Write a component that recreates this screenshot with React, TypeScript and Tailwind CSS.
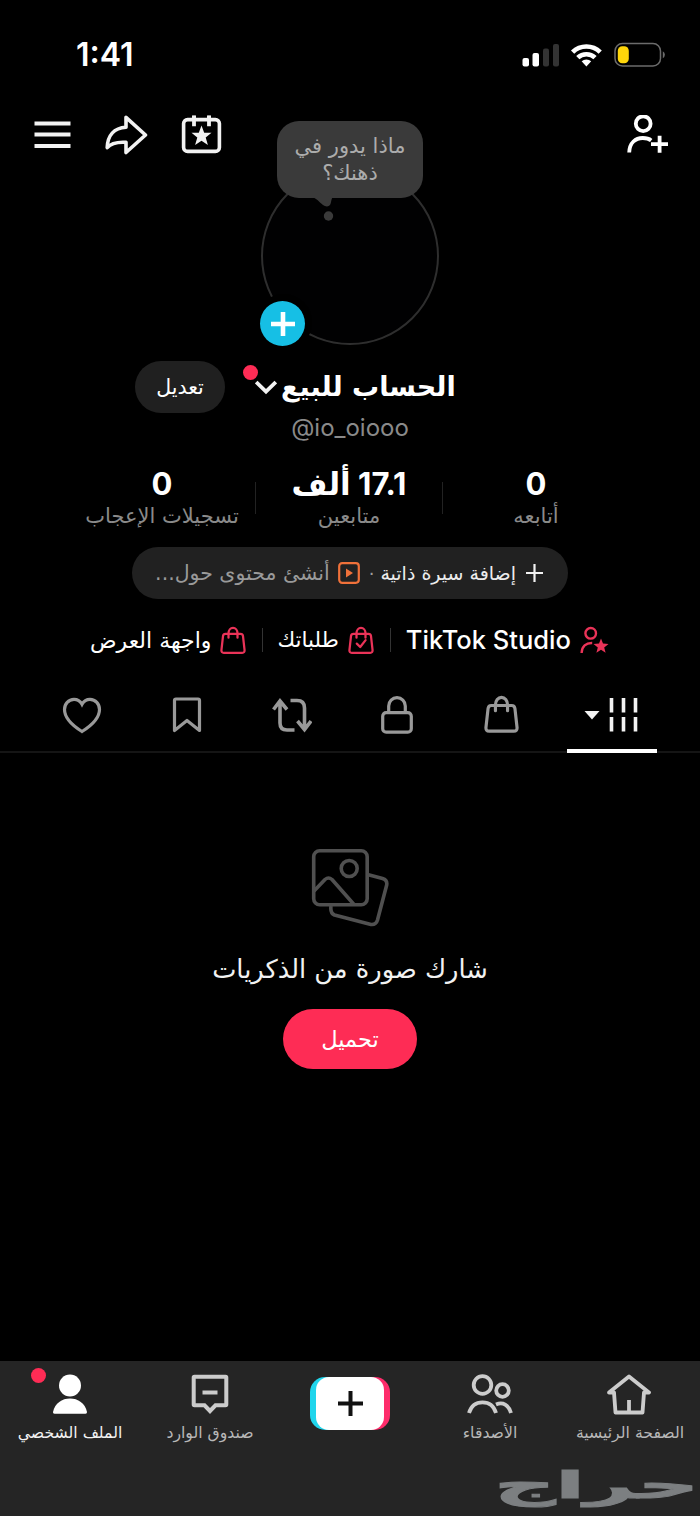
import type { ReactNode } from "react";

const arabic = "font-['DejaVu_Sans','Noto_Sans',sans-serif]";

function StatusBar() {
  return (
    <div className="flex h-[110px] items-center justify-between pl-[76px] pr-[34px]">
      <span className="text-[32px] font-semibold leading-none">
        1:41
      </span>
      <div className="flex items-center">
        <svg width="38" height="24" viewBox="0 0 38 24">
          <rect x="0.5" y="15" width="6.5" height="8.5" rx="2" fill="#fff" />
          <rect x="10.5" y="10" width="6.5" height="13.5" rx="2" fill="#fff" />
          <rect x="21" y="5.5" width="6" height="18" rx="2" fill="#333" />
          <rect x="31" y="1" width="6" height="22.5" rx="2" fill="#333" />
        </svg>
        <svg className="ml-[10px]" width="33" height="24" viewBox="0 0 33 24">
          <g fill="none" stroke="#fff" strokeWidth="4.6">
            <path d="M2.6 9.2a19.6 19.6 0 0 1 27.6 0" />
            <path d="M7.8 14.7a12.3 12.3 0 0 1 17.2 0" />
          </g>
          <path d="M11.6 18.3a7 7 0 0 1 9.6 0L16.4 23.4z" fill="#fff" />
        </svg>
        <svg className="ml-[11px]" width="52" height="26" viewBox="0 0 52 26">
          <rect x="1" y="1.5" width="45.5" height="22.5" rx="7.5" fill="none" stroke="#6b6b6b" strokeWidth="1.5" />
          <rect x="3.8" y="4.2" width="11" height="17" rx="4.5" fill="#ffd60a" />
          <path d="M48.8 9.3a4 4 0 0 1 0 7z" fill="#6b6b6b" />
        </svg>
      </div>
    </div>
  );
}

function Header() {
  return (
    <header className="flex h-[50px] items-center justify-between pl-[34px] pr-[31px]">
      <div className="flex items-center">
        <svg width="37" height="28" viewBox="0 0 37 28" stroke="#f2f2f2" strokeWidth="3.8">
          <path d="M.5 2.5h36M.5 13.5h36M.5 25h36" />
        </svg>
        <svg className="ml-[34px]" width="43" height="40" viewBox="0 0 43 40" fill="none" stroke="#f2f2f2" strokeWidth="3.6" strokeLinejoin="round">
          <path d="M21 2.3 40.5 20 21 37.5V27.3C12 26.8 6 28 2.2 32.6 2.6 20.5 9 13 21 12.3z" />
        </svg>
        <svg className="ml-[33px]" width="42" height="40" viewBox="0 0 42 40">
          <rect x="2.600" y="4.600" width="35.800" height="31.800" rx="4" fill="none" stroke="#f2f2f2" strokeWidth="3.6" />
          <path d="M13 .5v5M28 .5v5" stroke="#f2f2f2" strokeWidth="3.8" />
          <path d="M13 .8v10.4M28 .8v10.4" stroke="#f2f2f2" strokeWidth="3.8" />
          <path d="M20.500 10.500l2.700 7.300h7.300l-5.800 4.800 2.200 7.400-6.400-4.300-6.400 4.300 2.200-7.400-5.800-4.800h7.300z" fill="#f2f2f2" />
        </svg>
      </div>
      <svg width="42" height="40" viewBox="0 0 42 40" fill="none" stroke="#fff" strokeWidth="3.8">
        <circle cx="16.2" cy="8.7" r="7.4" />
        <path d="M2.2 37.500c.3-10 6.500-14.500 13.500-14.500 4.200 0 7 1.200 8.500 2.400" />
        <path d="M24 29.200h17M32.600 20.800v17" />
      </svg>
    </header>
  );
}

function Avatar() {
  return (
    <div className="relative mx-auto mt-[7px] size-[178px] rounded-full border-2 border-[#2e2e2e] bg-[#010102]">
      <div className="absolute -left-2 top-[125px] size-[57px] rounded-full bg-black" />
      <button className="absolute -left-[3px] top-[132px] flex size-[45px] items-center justify-center rounded-full bg-[#16bfe5]">
        <svg width="24" height="24" viewBox="0 0 24 24" stroke="#fff" strokeWidth="4.6">
          <path d="M0 12h24M12 0v24" />
        </svg>
      </button>
      <div className="absolute left-[14px] -top-[48px] flex h-[77px] w-[146px] items-center justify-center rounded-[22px] bg-[#3a3a3a]">
        <p dir="rtl" className={`${arabic} flex flex-col items-center whitespace-nowrap pt-px text-[21px] leading-[27px] text-[#acacac]`}>
          <span>ماذا يدور في</span>
          <span>ذهنك؟</span>
        </p>
      </div>
      <svg className="absolute left-[48px] top-[28px]" width="32" height="26" viewBox="0 0 32 26" fill="#3a3a3a">
        <path d="M0 0h22c-2 2-1.500 4-2.500 7-1 3-5 3-7.500 1C8 5 6 1 0 0z" />
        <circle cx="17.500" cy="19" r="4.700" />
      </svg>
    </div>
  );
}

function NameRow() {
  return (
    <div className="mt-[16px] flex h-[52px] items-center pl-[135px]">
      <button dir="rtl" className={`${arabic} h-[52px] w-[90px] rounded-full bg-[#202020] text-[20.500px]`}>
        تعديل
      </button>
      <div className="relative ml-[30px] flex items-center">
        <span className="absolute -left-[12px] -top-[4px] size-[15px] rounded-full bg-[#fe2c55]" />
        <svg width="22" height="15" viewBox="0 0 22 15" fill="none" stroke="#f2f2f2" strokeWidth="3.8">
          <path d="M1.200 2 11 11.500l9.800-9.500" />
        </svg>
        <h1 dir="rtl" className={`${arabic} ml-1 whitespace-nowrap text-[27px] font-bold leading-[36px]`}>
          الحساب للبيع
        </h1>
      </div>
    </div>
  );
}

function Stat({ value, label }: { value: string; label: string }) {
  return (
    <div dir="rtl" className="flex flex-col items-center whitespace-nowrap">
      <span className="font-['Inter','DejaVu_Sans',sans-serif] text-[31px] font-bold leading-[36px]">
        {value}
      </span>
      <span className={`${arabic} text-[21px] leading-[28px] text-[#8a8a8a]`}>
        {label}
      </span>
    </div>
  );
}

function Stats() {
  return (
    <div className="mt-[24px] grid grid-cols-[186px_1px_186px_1px_186px] items-center justify-center pr-[2px]">
      <Stat value="0" label="تسجيلات الإعجاب" />
      <span className="h-8 bg-[#222]" />
      <Stat value="17.1 ألف" label="متابعين" />
      <span className="h-8 bg-[#222]" />
      <Stat value="0" label="أتابعه" />
    </div>
  );
}

function BioPill() {
  return (
    <div dir="rtl" className={`${arabic} mx-auto mt-[17px] flex h-[52px] w-[436px] items-center whitespace-nowrap rounded-full bg-[#212121] pr-[25px]`}>
      <svg width="17" height="18" viewBox="0 0 17 18" stroke="#f2f2f2" strokeWidth="2.200">
        <path d="M0 9h17M8.500 0v18" />
      </svg>
      <span className="mr-[10px] text-[19px] text-[#ececec]">إضافة سيرة ذاتية</span>
      <span className="mx-[6px] text-[18px] text-[#a0a0a0]">·</span>
      <svg className="mr-[3px]" width="22" height="22" viewBox="0 0 22 22">
        <rect x="1.200" y="1.200" width="19.600" height="19.600" rx="3" fill="none" stroke="#f0713a" strokeWidth="2.200" />
        <path d="M8 6.500v9l7-4.500z" fill="#f0713a" />
      </svg>
      <span className="mr-[8px] text-[20.500px] text-[#9a9a9a]">أنشئ محتوى حول...</span>
    </div>
  );
}

const bagBody = "M5.500 8h15.500q2.200 0 2.500 2.200l1.600 14.300q.3 3-2.500 3H4q-2.800 0-2.500-3l1.600-14.300q.300-2.200 2.400-2.200z";
const bagHandle = "M8.700 12V7.500a4.600 5.700 0 0 1 9.200 0V12";

function Bag({ size, color, strokeWidth, children }: { size: number; color: string; strokeWidth: number; children?: ReactNode }) {
  return (
    <svg width={size} height={(size * 29) / 26.6} viewBox="0 0 26.6 29" fill="none" stroke={color} strokeWidth={strokeWidth} strokeLinejoin="round" strokeLinecap="round">
      <path d={bagBody} />
      <path d={bagHandle} />
      {children}
    </svg>
  );
}

function QuickLinks() {
  return (
    <div className={`${arabic} mt-[22px] flex h-[38px] items-center whitespace-nowrap pl-[90px] text-[22px]`}>
      <span dir="rtl">واجهة العرض</span>
      <span className="ml-[9px]">
        <Bag size={26} color="#ea3358" strokeWidth={2.3} />
      </span>
      <span className="ml-[16px] h-6 w-px bg-[#333]" />
      <span dir="rtl" className="ml-[14px] text-[21.500px]">طلباتك</span>
      <span className="ml-[9px]">
        <Bag size={26} color="#ea3358" strokeWidth={2.3}>
          <path d="m9 18 3.500 3.500 5.500-7" />
        </Bag>
      </span>
      <span className="ml-[16px] h-6 w-px bg-[#333]" />
      <span className="ml-[15px] font-['Inter',sans-serif] text-[25.500px] font-medium">
        TikTok Studio
      </span>
      <svg className="ml-[9px]" width="29" height="28" viewBox="0 0 29 28" fill="none" stroke="#ea3358" strokeWidth="2.400">
        <circle cx="10.700" cy="7.300" r="5.300" />
        <path d="M1.600 27c.2-6.600 4.400-10.200 10.600-10" />
        <path d="m21 12.500 2 5.100 5.500.3-4.300 3.500 1.400 5.300-4.600-3-4.600 3 1.400-5.300-4.300-3.500 5.500-.3z" fill="#ea3358" stroke="none" />
      </svg>
    </div>
  );
}

function Tabs() {
  return (
    <nav className="mt-3 flex h-[82px] border-b-2 border-[#151515] pl-[29px]">
      <div className="flex w-[105px] items-center justify-center pt-[7px]">
        <svg width="40" height="38" viewBox="0 0 40 38" fill="none" stroke="#999" strokeWidth="3.2">
          <path d="M20 35.500C12 30.500 2.500 23 2.500 13.500 2.500 8 6.500 3.300 12 3.300c3.500 0 6.300 1.900 8 5 1.700-3.100 4.500-5 8-5 5.500 0 9.500 4.700 9.500 10.200C37.500 23 28 30.500 20 35.500z" />
        </svg>
      </div>
      <div className="flex w-[105px] items-center justify-center pt-[7px]">
        <svg width="30" height="36" viewBox="0 0 30 36" fill="none" stroke="#999" strokeWidth="3.2" strokeLinejoin="round">
          <path d="M2.500 3.500q0-1.500 1.500-1.500h22q1.500 0 1.500 1.500v30L15 23.500l-12.500 10z" />
        </svg>
      </div>
      <div className="flex w-[105px] items-center justify-center pt-[7px]">
        <svg width="40" height="36" viewBox="0 0 40 36" fill="none" stroke="#999" strokeWidth="3.600">
          <path d="M1.500 12.500 8 4l7 8.500M8 4.500V26q0 7 7 7h7.500" />
          <path d="M18.500 3.500h6.500q7.500 0 7.500 7.500v21M25.500 24l7 8.500 6.500-8.500" />
        </svg>
      </div>
      <div className="flex w-[105px] items-center justify-center pt-[7px]">
        <svg width="32" height="38" viewBox="0 0 32 38" fill="none" stroke="#999" strokeWidth="3.2">
          <rect x="1.700" y="16.700" width="28.600" height="19.500" rx="3.500" />
          <path d="M7.700 16.700V10a8.300 8.300 0 0 1 16.600 0v6.700" />
        </svg>
      </div>
      <div className="flex w-[105px] items-center justify-center pt-[7px]">
        <Bag size={35} color="#999" strokeWidth={2.4} />
      </div>
      <div className="ml-[13px] flex h-[82px] w-[90px] items-center justify-center border-b-[4px] border-white pt-[10px] pr-[2px]">
        <svg width="54" height="34" viewBox="0 0 54 34">
          <path d="M.5 13h15L8 21.500z" fill="#f2f2f2" />
          <path d="M27.500 0v14.500M39.500 0v14.500M51.500 0v14.500M27.500 19v14.500M39.500 19v14.500M51.500 19v14.500" stroke="#f2f2f2" strokeWidth="3.6" />
        </svg>
      </div>
    </nav>
  );
}

function EmptyState() {
  return (
    <main className="flex flex-1 flex-col items-center pt-[96px]">
      <svg width="78" height="79" viewBox="0 0 78 79" fill="none" stroke="#505050" strokeWidth="3.6" strokeLinejoin="round">
        <rect x="2.700" y="1.800" width="53.500" height="54" rx="6" />
        <circle cx="38.200" cy="19.500" r="8" />
        <path d="m3 42 11-11.500q3.500-3 7 0L43 55.500" />
        <path d="m56.500 25.500 15 4q5 1.500 4.200 6.500L66.500 71q-1.500 5-6.500 4.500L23.500 66q-4.500-2-3.500-9" />
      </svg>
      <p dir="rtl" className={`${arabic} mt-[22px] whitespace-nowrap text-[25.700px] leading-[38px] text-[#f2f2f2]`}>
        شارك صورة من الذكريات
      </p>
      <button dir="rtl" className={`${arabic} mt-[21px] h-[60px] w-[134px] rounded-full bg-[#fe2c55] pt-[2px] text-[22.500px]`}>
        تحميل
      </button>
    </main>
  );
}

function NavItem({ label, active, children }: { label: string; active?: boolean; children: ReactNode }) {
  return (
    <div className="flex w-[140px] flex-col items-center pt-[11px]">
      <span className="relative flex h-[44px] items-center">{children}</span>
      <span dir="rtl" className={`${arabic} mt-[6px] whitespace-nowrap text-[15.700px] leading-[22px] ${active ? "text-[#f2f2f2]" : "text-[#b8b8b8]"}`}>
        {label}
      </span>
    </div>
  );
}

function BottomNav() {
  return (
    <footer className="h-[155px] overflow-hidden bg-[#252525]">
      <div className="flex h-[100px]">
        <NavItem label="الملف الشخصي" active>
          <span className="absolute -left-[21px] -top-[4px] size-[15px] rounded-full bg-[#fe2c55]" />
          <svg width="36" height="42" viewBox="0 0 36 42" fill="#fff">
            <circle cx="18" cy="12.500" r="11" />
            <path d="M1 39C3 30 10 25.500 18 25.500s15 4.500 17 13.500q.2 1.800-1.500 1.800h-31Q.8 40.800 1 39z" />
          </svg>
        </NavItem>
        <NavItem label="صندوق الوارد">
          <svg width="38" height="40" viewBox="0 0 38 40" fill="none" stroke="#ccc" strokeWidth="4">
            <path d="M3.500 2.700h31q.8 0 .8.8v27q0 .8-.8.8H24.500L19 37l-5.500-5.700h-10q-.8 0-.8-.8v-27q0-.8.8-.8z" />
            <path d="M11.500 18.500h15" />
          </svg>
        </NavItem>
        <div className="flex w-[140px] justify-center pt-[16px]">
          <div className="flex h-[53px] w-[80px] rounded-[15px] bg-linear-to-r from-[#20d5ec] from-50% to-[#fe2c6b] to-50% px-[6px]">
            <div className="flex flex-1 items-center justify-center rounded-[13px] bg-white">
              <svg width="25" height="25" viewBox="0 0 25 25" stroke="#111" strokeWidth="4">
                <path d="M0 12.500h25M12.500 0v25" />
              </svg>
            </div>
          </div>
        </div>
        <NavItem label="الأصدقاء">
          <svg width="46" height="40" viewBox="0 0 46 40" fill="none" stroke="#ccc" strokeWidth="3.800">
            <circle cx="15.500" cy="11" r="8.800" />
            <circle cx="35.500" cy="16.500" r="6.300" />
            <path d="M2 39c2-7 7-10.700 13.500-10.700S27 32 29 39" />
            <path d="M29 30.500c7-3 12.500.5 15 8.500" />
          </svg>
        </NavItem>
        <NavItem label="الصفحة الرئيسية">
          <svg className="-ml-[2px]" width="44" height="41" viewBox="0 0 44 41" fill="none" stroke="#ccc" strokeWidth="3.800" strokeLinejoin="round">
            <path d="M7 18.500H2L22 2.500l20 16h-5L35.500 38.500h-27z" />
            <path d="M22 26v12" />
          </svg>
        </NavItem>
      </div>
      <div dir="rtl" className="flex h-[55px] justify-start pr-px">
        <span className={`${arabic} origin-right scale-x-[2.3] text-[37px] font-bold leading-[50px] text-[#7c7f81] [-webkit-text-stroke:1px_#7c7f81]`}>
          حراج
        </span>
      </div>
    </footer>
  );
}

function App() {
  return (
    <div className="flex h-[1516px] w-[700px] flex-col overflow-hidden bg-black font-['Inter',sans-serif] text-white">
      <StatusBar />
      <Header />
      <Avatar />
      <NameRow />
      <p className="text-center text-[24px] leading-[29px] text-[#8a8a8a]">
        @io_oiooo
      </p>
      <Stats />
      <BioPill />
      <QuickLinks />
      <Tabs />
      <EmptyState />
      <BottomNav />
    </div>
  );
}

export default App;
